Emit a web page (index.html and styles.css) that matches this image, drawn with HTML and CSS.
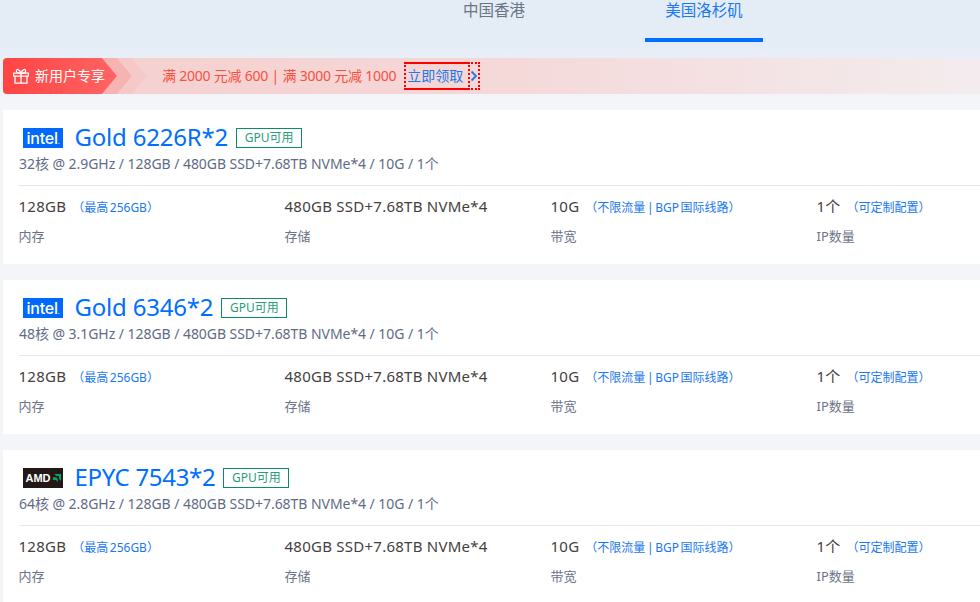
FILE: index.html
```html
<!DOCTYPE html>
<html lang="zh-CN">
<head>
<meta charset="utf-8">
<title>服务器</title>
<link rel="stylesheet" href="styles.css">
</head>
<body>
<nav class="tabs">
  <a class="tab">中国香港</a>
  <a class="tab active">美国洛杉矶</a>
</nav>
<section class="promo">
  <div class="promo-badge">
    <svg class="gift" viewBox="0 0 16 16" width="16" height="16" fill="none" stroke="#fff" stroke-width="1.3">
      <path d="M.7 5.200h14.600v3H.7zM2 8.200v7h12v-7M8 5.200v10"/>
      <path d="M8 5.200C6.500 .8 3.400 .6 3.400 2.900 3.400 4.500 5.800 5.200 8 5.200c2.200 0 4.600-.7 4.600-2.300C12.600 .6 9.500 .8 8 5.200z"/>
    </svg>
    <span class="promo-label">新用户专享</span>
  </div>
  <i class="chev chev1"></i>
  <i class="chev chev2"></i>
  <span class="promo-text">满 2000 元减 600 | 满 3000 元减 1000</span>
  <a class="claim"><span class="claim-text">立即领取</span><svg class="claim-arrow" viewBox="0 0 8 12" width="8" height="12" fill="none" stroke="#1a78f0" stroke-width="1.800"><path d="M1.500 1.500l4.500 4.500-4.500 4.500"/></svg></a>
</section>
<main class="cards">
  <article class="card">
    <header class="head">
      <span class="logo intel">intel<b>.</b></span>
      <h2 class="name">Gold 6226R*2</h2>
      <span class="tag">GPU可用</span>
    </header>
    <p class="sub">32核 @ 2.9GHz / 128GB / 480GB SSD+7.68TB NVMe*4 / 10G / 1个</p>
    <div class="specs">
      <div class="spec"><div class="val">128GB<small>（最高 256GB）</small></div><div class="lab">内存</div></div>
      <div class="spec"><div class="val">480GB SSD+7.68TB NVMe*4</div><div class="lab">存储</div></div>
      <div class="spec"><div class="val">10G<small>（不限流量 | BGP 国际线路）</small></div><div class="lab">带宽</div></div>
      <div class="spec"><div class="val">1个<small>（可定制配置）</small></div><div class="lab">IP数量</div></div>
    </div>
  </article>
  <article class="card">
    <header class="head">
      <span class="logo intel">intel<b>.</b></span>
      <h2 class="name">Gold 6346*2</h2>
      <span class="tag">GPU可用</span>
    </header>
    <p class="sub">48核 @ 3.1GHz / 128GB / 480GB SSD+7.68TB NVMe*4 / 10G / 1个</p>
    <div class="specs">
      <div class="spec"><div class="val">128GB<small>（最高 256GB）</small></div><div class="lab">内存</div></div>
      <div class="spec"><div class="val">480GB SSD+7.68TB NVMe*4</div><div class="lab">存储</div></div>
      <div class="spec"><div class="val">10G<small>（不限流量 | BGP 国际线路）</small></div><div class="lab">带宽</div></div>
      <div class="spec"><div class="val">1个<small>（可定制配置）</small></div><div class="lab">IP数量</div></div>
    </div>
  </article>
  <article class="card">
    <header class="head">
      <span class="logo amd">AMD<svg viewBox="0 0 10 10" width="9" height="9"><path fill="#00a56a" d="M2.500 0H10v7.500L7.800 5.300V2.200H4.700zM1 3.500h3.500L6.500 5.500V9L4.300 6.800H1z"/></svg></span>
      <h2 class="name name-tight">EPYC 7543*2</h2>
      <span class="tag">GPU可用</span>
    </header>
    <p class="sub">64核 @ 2.8GHz / 128GB / 480GB SSD+7.68TB NVMe*4 / 10G / 1个</p>
    <div class="specs">
      <div class="spec"><div class="val">128GB<small>（最高 256GB）</small></div><div class="lab">内存</div></div>
      <div class="spec"><div class="val">480GB SSD+7.68TB NVMe*4</div><div class="lab">存储</div></div>
      <div class="spec"><div class="val">10G<small>（不限流量 | BGP 国际线路）</small></div><div class="lab">带宽</div></div>
      <div class="spec"><div class="val">1个<small>（可定制配置）</small></div><div class="lab">IP数量</div></div>
    </div>
  </article>
</main>
</body>
</html>
```
FILE: styles.css
```css
* { box-sizing: border-box; }
html, body { height: 100%; }
body {
  margin: 0;
  overflow: hidden;
  font-family: "Noto Sans", "Noto Sans CJK SC", sans-serif;
  background: linear-gradient(180deg, #e4ecf6 0, #e4ecf6 42px, #f3f5f9 100px, #f3f5f9 100%);
}
.tabs {
  display: flex;
  height: 42px;
  padding-left: 443px;
  gap: 100px;
}
.tab {
  width: 102px;
  height: 42px;
  font-size: 15.500px;
  line-height: 21px;
  text-align: center;
  color: #6b7484;
}
.tab.active {
  width: 118px;
  color: #1a78f0;
  border-bottom: 4px solid #006eff;
}
.promo {
  position: relative;
  display: flex;
  align-items: center;
  height: 36px;
  margin: 16px 0 0 3px;
  background: linear-gradient(90deg, #f5cfcf 0, #f5d6d6 45%, #f3ecee 100%);
  border-radius: 4px 0 0 4px;
}
.promo-badge {
  display: flex;
  align-items: center;
  gap: 6px;
  width: 114px;
  height: 36px;
  padding-left: 10px;
  font-size: 14px;
  color: #fff;
  background: linear-gradient(90deg, #ff4444, #ff6464);
  clip-path: polygon(0 0, 99px 0, 114px 18px, 99px 36px, 0 36px);
  border-radius: 4px 0 0 4px;
  flex: none;
  z-index: 3;
}
.gift { flex: none; }
.promo-label { padding-bottom: 2px; }
.chev {
  position: absolute;
  top: 0;
  height: 36px;
  width: 30px;
}
.chev1 { left: 99px; background: #f7b2b2; clip-path: polygon(0 0, 15px 0, 30px 18px, 15px 36px, 0 36px, 15px 18px); z-index: 2; }
.chev2 { left: 114px; background: #f6c9c9; clip-path: polygon(0 0, 15px 0, 30px 18px, 15px 36px, 0 36px, 15px 18px); z-index: 1; }
.promo-text {
  margin-left: 45px;
  padding-bottom: 2px;
  font-size: 14px;
  letter-spacing: -0.22px;
  color: #f9503e;
  white-space: nowrap;
  flex: none;
}
.claim {
  display: flex;
  align-items: center;
  height: 28px;
  margin-left: 8px;
  border: 2px dotted #f00;
  color: #1a78f0;
  font-size: 14px;
}
.claim-text {
  display: block;
  height: 28px;
  margin: -2px 0;
  padding: 0 5px 0 1px;
  border-top: 2px solid #f00;
  border-bottom: 2px solid #f00;
  border-right: 2px dotted #f00;
  line-height: 23px;
  white-space: nowrap;
}
.cards {
  display: flex;
  flex-direction: column;
  gap: 16px;
  margin: 16px 0 0 3px;
}
.card {
  flex: none;
  height: 154px;
  background: #fff;
  overflow: hidden;
}
.head {
  display: flex;
  align-items: center;
  height: 20px;
  margin: 18px 0 0 20px;
}
.logo {
  display: flex;
  align-items: center;
  justify-content: center;
  width: 40px;
  height: 20px;
  flex: none;
  color: #fff;
  font-family: "Inter", "Liberation Sans", sans-serif;
  font-weight: 500;
}
.intel { background: #0068ff; font-size: 16px; letter-spacing: -0.2px; }
.intel b { font-size: 7px; font-weight: 400; align-self: flex-end; line-height: 13px; }
.amd { background: #231815; font-size: 11px; font-weight: 800; gap: 1px; font-family: "Liberation Sans", sans-serif; }
.name {
  margin: 0 0 0 11.500px;
  padding-bottom: 2px;
  font-size: 24px;
  font-weight: 400;
  line-height: 20px;
  letter-spacing: -0.2px;
  color: #006eff;
  white-space: nowrap;
}
.name-tight { letter-spacing: -0.3px; }
.tag {
  width: 66px;
  height: 20px;
  margin-left: 8px;
  flex: none;
  border: 1px solid #0d8a66;
  text-align: center;
  font-size: 12px;
  line-height: 18px;
  color: #2a9d7a;
}
.sub {
  margin: 7px 0 0 16px;
  font-size: 14px;
  line-height: 18px;
  letter-spacing: -0.05px;
  color: #5f6b85;
  white-space: nowrap;
}
.specs {
  display: grid;
  grid-template-columns: repeat(4, 266px);
  margin: 12px 0 0 15.500px;
  padding-top: 9px;
  border-top: 1px solid #e3e8f1;
}
.val {
  height: 22px;
  font-size: 15px;
  line-height: 22px;
  letter-spacing: 0.25px;
  color: #443e40;
  white-space: nowrap;
}
.val small {
  margin-left: 6px;
  font-size: 12px;
  letter-spacing: 0;
  word-spacing: -1.500px;
  color: #1a78f0;
}
.lab {
  margin-top: 9.500px;
  font-size: 13px;
  line-height: 18px;
  color: #6d7488;
}
```
